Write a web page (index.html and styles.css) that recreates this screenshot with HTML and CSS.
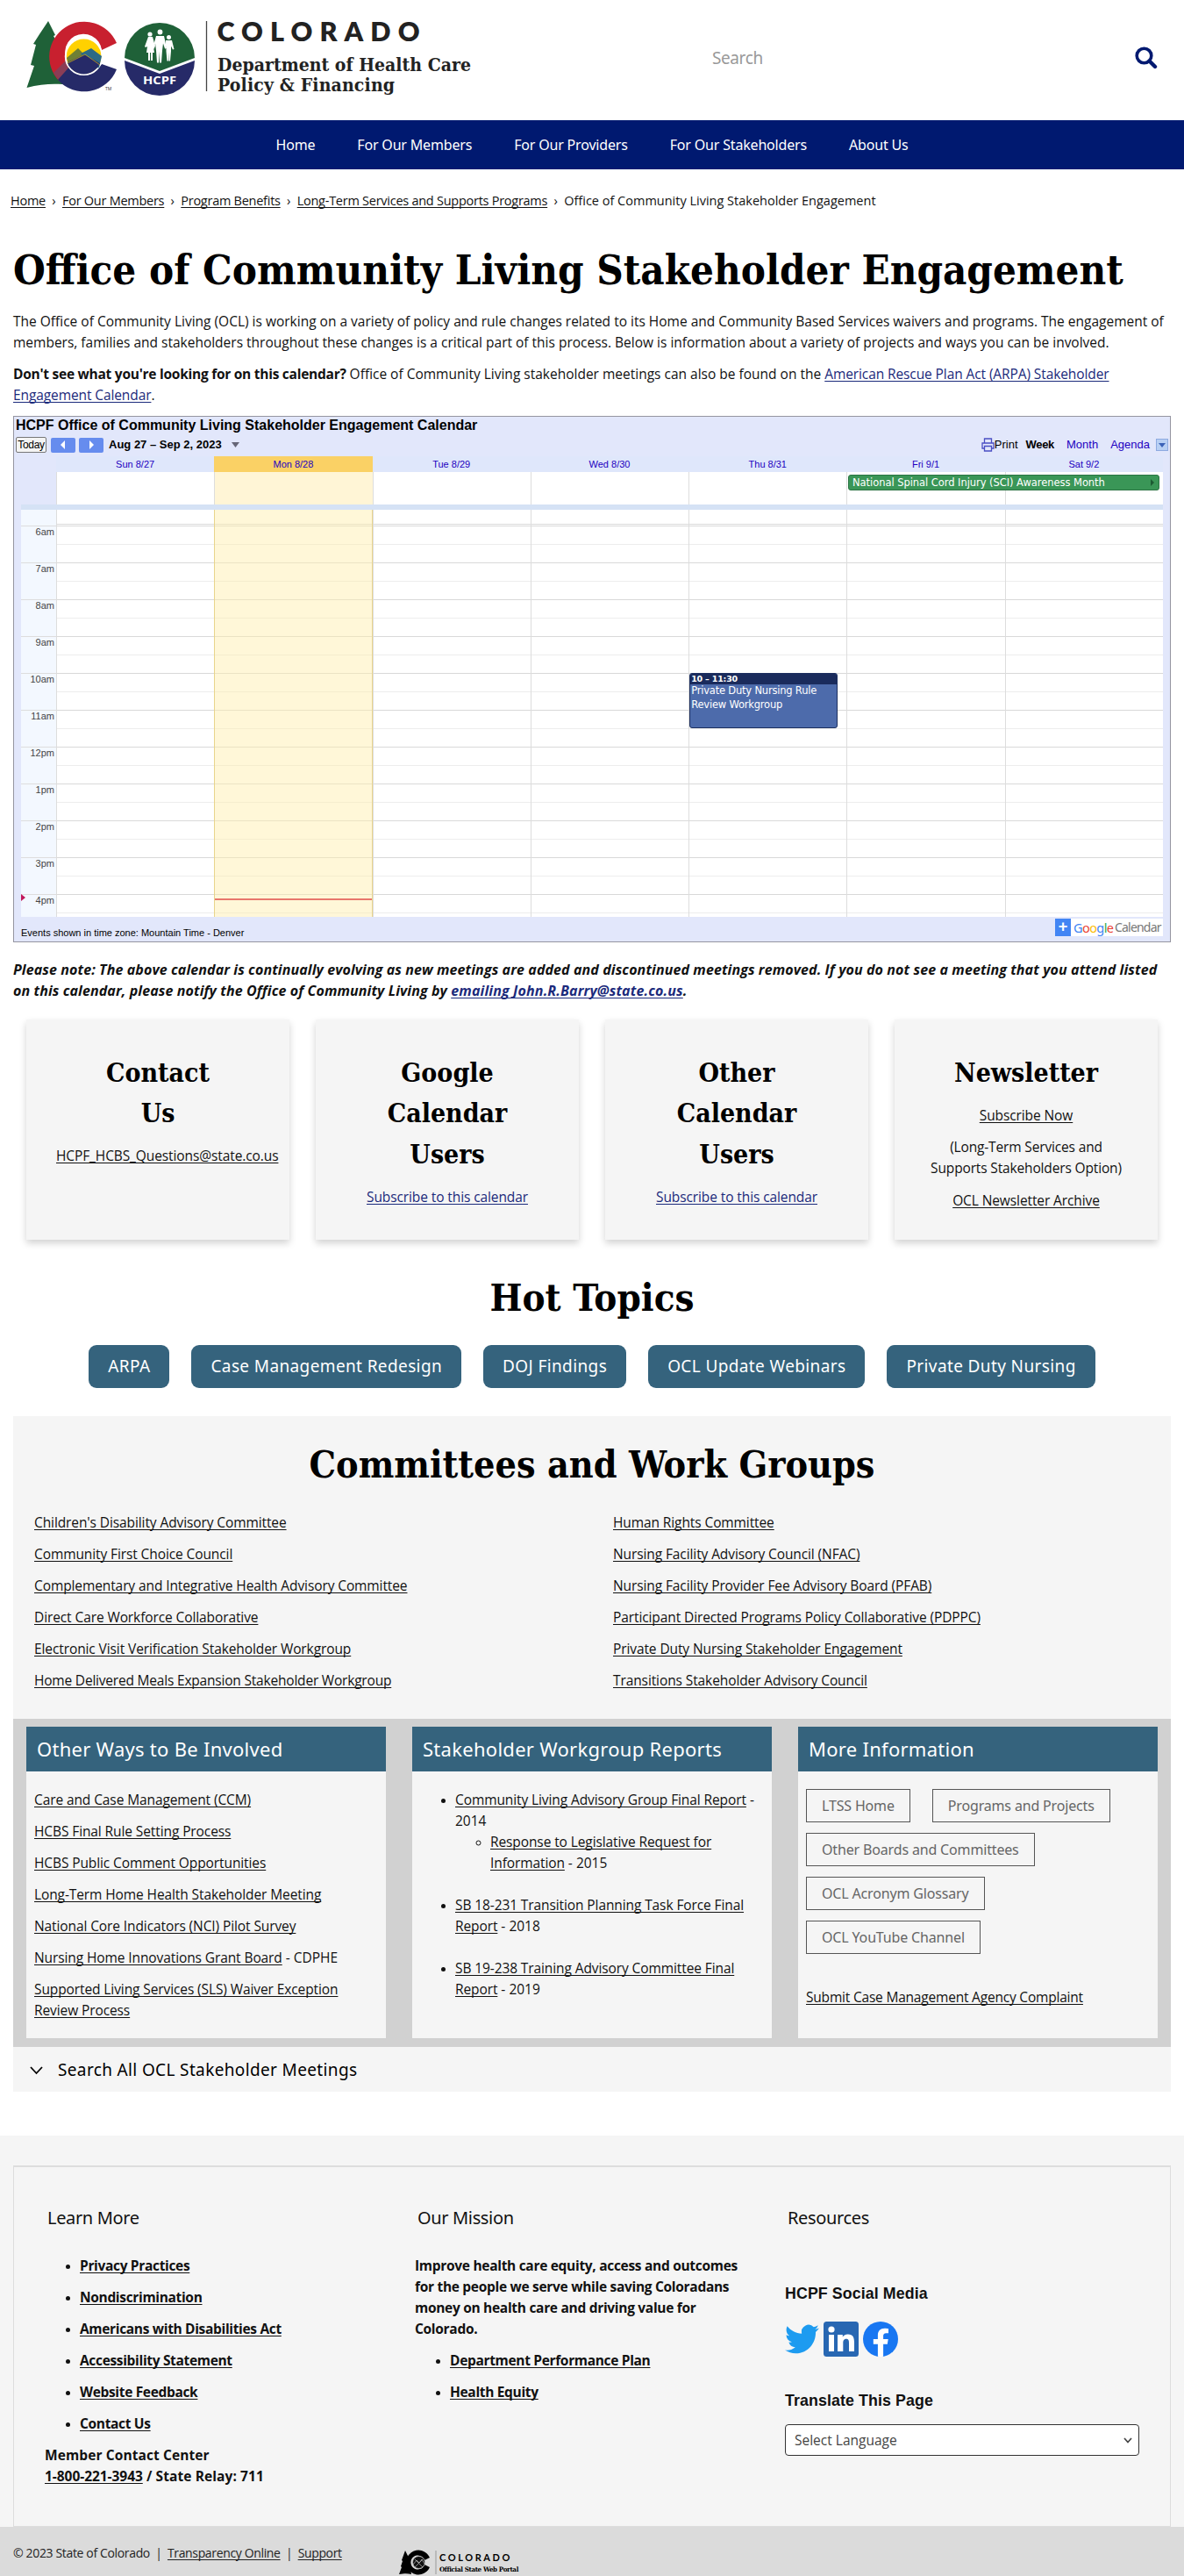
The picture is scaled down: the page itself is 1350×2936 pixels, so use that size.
FILE: index.html
```html
<!DOCTYPE html>
<html lang="en">
<head>
<meta charset="utf-8">
<title>Office of Community Living Stakeholder Engagement</title>
<link rel="stylesheet" href="styles.css">
</head>
<body>
<header class="masthead">
  <svg class="brand" width="560" height="137" viewBox="0 0 560 137">
    <path fill="#1f6138" d="M55 24l8 16-2 1 8 15-3 1 9 17 4 23c-13-2-30-2-48.500 3L39 75l-4-1 6-23-3-1 7-11z"/>
    <path fill="#c8202f" d="M133 49A40 40 0 1 0 67 92L82 76A21 21 0 1 1 116 57z"/>
    <path fill="#8a3d56" d="M61 83l14-14 7 10-14 14z"/>
    <path fill="#262a68" d="M133 79A40 40 0 0 1 66 91L81 74A21 21 0 0 0 116 73z"/>
    <circle cx="95.600" cy="64.300" r="20.800" fill="#ffd100" stroke="#fff" stroke-width="2"/>
    <path fill="#6f8035" d="M76 66l13-11 8 8-18 13z"/>
    <path fill="#2c6a86" d="M92 61l12-6 12 9-3 13-8 1z"/>
    <path fill="#262a68" d="M77 71l19-9 18 10a20 20 0 0 1-37 0z"/>
    <path fill="none" stroke="#ffd100" stroke-width=".6" d="M77 72l20-10 17 12"/>
    <text x="120" y="103" font-size="5" fill="#333" class="brand-sans">TM</text>
    <path fill="#1f6138" d="M142 66a40 40 0 1 1 80 0l-40 15z"/>
    <path fill="#262a68" d="M142 69l40 15 40-15a40 40 0 0 1-80 0z"/>
    <g fill="#fff">
      <circle cx="171" cy="39" r="2.600"/><path d="M169 42h5l3 11-2 1 1 6h-2v9h-2v-9h-1v9h-2v-9h-2l1-7-2 1-1-1z"/>
      <circle cx="182.500" cy="36.500" r="2.900"/><path d="M178 41h9l3 14-2 .500-2-6-1 8-1 14h-2l-.500-13-.500 13h-2l-1-14-1-8-1 6-2-.500z"/>
      <circle cx="192.500" cy="42.500" r="2.500"/><path d="M189 46h7l2.500 10-1.500.500-2-4v6l-1 11h-1.500v-10l-.500 10h-1.500l-1-11v-6l-1 4z"/>
    </g>
    <text x="163" y="96" font-size="12.500" textLength="38" lengthAdjust="spacingAndGlyphs" fill="#fff" font-weight="700" class="brand-sans">HCPF</text>
    <path stroke="#444" stroke-width="1.300" d="M235.500 24v80"/>
    <text x="247.500" y="47" font-size="30.500" textLength="231" fill="#222" font-weight="800" class="brand-lato">COLORADO</text>
    <text x="248" y="81" font-size="21" textLength="289" fill="#222" font-weight="700" class="brand-slab">Department of Health Care</text>
    <text x="248" y="104" font-size="21" textLength="202" fill="#222" font-weight="700" class="brand-slab">Policy &amp; Financing</text>
  </svg>
  <form class="search">
    <span>Search</span>
    <svg width="26" height="26" viewBox="0 0 26 26" fill="none" stroke="#001970"><circle cx="10.500" cy="10.500" r="8.300" stroke-width="3.600"/><path d="M16.500 16.500l6.500 6.500" stroke-width="4.400" stroke-linecap="round"/></svg>
  </form>
</header>
<nav class="mainnav"><a>Home</a><a>For Our Members</a><a>For Our Providers</a><a>For Our Stakeholders</a><a>About Us</a></nav>
<div class="crumbs"><a>Home</a><i>›</i><a>For Our Members</a><i>›</i><a>Program Benefits</a><i>›</i><a>Long-Term Services and Supports Programs</a><i>›</i><span>Office of Community Living Stakeholder Engagement</span></div>

<main>
  <h1>Office of Community Living Stakeholder Engagement</h1>
  <p class="intro">The Office of Community Living (OCL) is working on a variety of policy and rule changes related to its Home and Community Based Services waivers and programs. The engagement of<br>members, families and stakeholders throughout these changes is a critical part of this process. Below is information about a variety of projects and ways you can be involved.</p>
  <p class="intro"><b>Don't see what you're looking for on this calendar?</b> Office of Community Living stakeholder meetings can also be found on the <a class="blue">American Rescue Plan Act (ARPA) Stakeholder<br>Engagement Calendar</a>.</p>

  <section class="cal">
    <div class="cal-title">HCPF Office of Community Living Stakeholder Engagement Calendar</div>
    <div class="cal-bar">
      <span class="today">Today</span>
      <span class="step"><svg width="8" height="10"><path d="M6 0v10L1 5z" fill="#fff"/></svg></span>
      <span class="step"><svg width="8" height="10"><path d="M2 0v10l5-5z" fill="#fff"/></svg></span>
      <b class="range">Aug 27 – Sep 2, 2023</b>
      <svg width="10" height="6"><path d="M0 0h9L4.500 6z" fill="#667"/></svg>
      <div class="views">
        <svg width="15" height="16" viewBox="0 0 15 16" fill="none" stroke="#4a4fc4" stroke-width="1.300"><path d="M3.500 6V1h8v5M3.500 12H1V6h13v6h-2.500M3.500 9.500h8V15h-8z"/></svg>
        <span class="print">Print</span><b>Week</b><a>Month</a><a>Agenda</a>
        <span class="drop"><svg width="8" height="5"><path d="M0 0h8L4 5z" fill="#3b63b8"/></svg></span>
      </div>
    </div>
    <div class="cal-days"><span>Sun 8/27</span><span class="now">Mon 8/28</span><span>Tue 8/29</span><span>Wed 8/30</span><span>Thu 8/31</span><span>Fri 9/1</span><span>Sat 9/2</span></div>
    <div class="cal-allday"><span></span><span class="now"></span><span></span><span></span><span></span><span></span><span></span>
      <div class="ev-green">National Spinal Cord Injury (SCI) Awareness Month<svg width="5" height="8"><path d="M0 0v8l4-4z" fill="#1c5b33"/></svg></div>
    </div>
    <div class="cal-body">
      <div class="hours"><span>6am</span><span>7am</span><span>8am</span><span>9am</span><span>10am</span><span>11am</span><span>12pm</span><span>1pm</span><span>2pm</span><span>3pm</span><span>4pm</span><svg class="mark" width="5" height="8"><path d="M0 0v8l5-4z" fill="#c2185b"/></svg></div>
      <div class="cols"><span></span><span class="now"><i class="nowline"></i></span><span></span><span></span>
        <span><div class="ev-blue"><b>10 – 11:30</b>Private Duty Nursing Rule<br>Review Workgroup</div></span><span></span><span></span></div>
    </div>
    <div class="cal-foot"><span>Events shown in time zone: Mountain Time - Denver</span>
      <span class="gcal"><i>+</i><b><em class="g1">G</em><em class="g2">o</em><em class="g3">o</em><em class="g1">g</em><em class="g4">l</em><em class="g2">e</em></b><u>Calendar</u></span></div>
  </section>

  <p class="note">Please note: The above calendar is continually evolving as new meetings are added and discontinued meetings removed. If you do not see a meeting that you attend listed<br>on this calendar, please notify the Office of Community Living by <a class="blue">emailing John.R.Barry@state.co.us</a>.</p>

  <section class="cards">
    <div class="card"><h3>Contact<br>Us</h3><a class="mail">HCPF_HCBS_Questions@state.co.us</a></div>
    <div class="card"><h3>Google<br>Calendar<br>Users</h3><a class="blue">Subscribe to this calendar</a></div>
    <div class="card"><h3>Other<br>Calendar<br>Users</h3><a class="blue">Subscribe to this calendar</a></div>
    <div class="card"><h3>Newsletter</h3><a>Subscribe Now</a><p>(Long-Term Services and<br>Supports Stakeholders Option)</p><a>OCL Newsletter Archive</a></div>
  </section>

  <h2 class="hot">Hot Topics</h2>
  <div class="pills"><a>ARPA</a><a>Case Management Redesign</a><a>DOJ Findings</a><a>OCL Update Webinars</a><a>Private Duty Nursing</a></div>

  <section class="groups">
    <h2>Committees and Work Groups</h2>
    <div class="two">
      <div class="links"><a>Children's Disability Advisory Committee</a><a>Community First Choice Council</a><a>Complementary and Integrative Health Advisory Committee</a><a>Direct Care Workforce Collaborative</a><a>Electronic Visit Verification Stakeholder Workgroup</a><a class="tight">Home Delivered Meals Expansion Stakeholder Workgroup</a></div>
      <div class="links"><a>Human Rights Committee</a><a>Nursing Facility Advisory Council (NFAC)</a><a>Nursing Facility Provider Fee Advisory Board (PFAB)</a><a>Participant Directed Programs Policy Collaborative (PDPPC)</a><a>Private Duty Nursing Stakeholder Engagement</a><a>Transitions Stakeholder Advisory Council</a></div>
    </div>
    <div class="three">
      <div class="panel"><h4>Other Ways to Be Involved</h4>
        <div class="links"><a>Care and Case Management (CCM)</a><a>HCBS Final Rule Setting Process</a><a>HCBS Public Comment Opportunities</a><a>Long-Term Home Health Stakeholder Meeting</a><a>National Core Indicators (NCI) Pilot Survey</a><p><a>Nursing Home Innovations Grant Board</a> - CDPHE</p><a>Supported Living Services (SLS) Waiver Exception<br>Review Process</a></div>
      </div>
      <div class="panel"><h4>Stakeholder Workgroup Reports</h4>
        <ul class="reports">
          <li><a>Community Living Advisory Group Final Report</a> -<br>2014
            <ul><li><a>Response to Legislative Request for<br>Information</a> - 2015</li></ul></li>
          <li><a>SB 18-231 Transition Planning Task Force Final<br>Report</a> - 2018</li>
          <li><a>SB 19-238 Training Advisory Committee Final<br>Report</a> - 2019</li>
        </ul>
      </div>
      <div class="panel"><h4>More Information</h4>
        <div class="outline"><a>LTSS Home</a><a>Programs and Projects</a><a>Other Boards and Committees</a><a>OCL Acronym Glossary</a><a>OCL YouTube Channel</a></div>
        <a class="submit">Submit Case Management Agency Complaint</a>
      </div>
    </div>
    <div class="expander"><svg width="15" height="10" fill="none" stroke="#000" stroke-width="1.800"><path d="M1 1l6.500 7L14 1"/></svg>Search All OCL Stakeholder Meetings</div>
  </section>
</main>

<footer>
  <div class="foot">
    <div><h5>Learn More</h5>
      <ul><li><a>Privacy Practices</a></li><li><a>Nondiscrimination</a></li><li><a>Americans with Disabilities Act</a></li><li><a>Accessibility Statement</a></li><li><a>Website Feedback</a></li><li><a>Contact Us</a></li></ul>
      <p>Member Contact Center<br><a>1-800-221-3943</a> / State Relay: 711</p></div>
    <div><h5>Our Mission</h5>
      <p class="mission">Improve health care equity, access and outcomes<br>for the people we serve while saving Coloradans<br>money on health care and driving value for<br>Colorado.</p>
      <ul><li><a>Department Performance Plan</a></li><li><a>Health Equity</a></li></ul></div>
    <div><h5>Resources</h5>
      <h6>HCPF Social Media</h6>
      <div class="social">
        <svg width="39" height="40" viewBox="0 0 24 24" preserveAspectRatio="none"><path fill="#1d9bf0" d="M23.950 4.570a10 10 0 0 1-2.820.770 4.960 4.960 0 0 0 2.160-2.720c-.950.550-2 .950-3.120 1.180a4.920 4.920 0 0 0-8.380 4.480C7.690 8.090 4.070 6.130 1.640 3.160a4.820 4.820 0 0 0-.670 2.480c0 1.710.870 3.210 2.190 4.100a4.900 4.900 0 0 1-2.230-.620v.060a4.920 4.920 0 0 0 3.950 4.830 5 5 0 0 1-2.210.080 4.940 4.940 0 0 0 4.600 3.420A9.870 9.870 0 0 1 0 19.540a14 14 0 0 0 7.550 2.210c9.050 0 14-7.500 14-13.980 0-.210 0-.420-.020-.630a9.940 9.940 0 0 0 2.420-2.570z"/></svg>
        <svg width="40" height="40" viewBox="0 0 40 40"><rect width="40" height="40" rx="3.500" fill="#2867b2"/><g fill="#fff"><circle cx="9" cy="9" r="3.600"/><path d="M6 15h6v19H6zM16 15h5.800v2.600c.900-1.600 3-3.200 6-3.200 6 0 7.200 3.900 7.200 9.100V34h-6v-9.300c0-2.200 0-5-3.100-5s-3.600 2.400-3.600 4.900V34H16z"/></g></svg>
        <svg width="40" height="40" viewBox="0 0 40 40"><circle cx="20" cy="20" r="20" fill="#1877f2"/><path fill="#fff" d="M27.800 25.800l.900-5.800h-5.600v-3.700c0-1.600.800-3.100 3.300-3.100H29v-5s-2.300-.400-4.500-.400c-4.600 0-7.600 2.800-7.600 7.800V20h-5.100v5.800h5.100v13.900a20 20 0 0 0 6.200 0V25.800z"/></svg>
      </div>
      <h6>Translate This Page</h6>
      <div class="select"><span>Select Language</span><svg width="10" height="7" fill="none" stroke="#444" stroke-width="1.700"><path d="M1 1l4 4.500L9 1"/></svg></div></div>
  </div>
  <div class="legal"><span>© 2023 State of Colorado</span><i>|</i><a>Transparency Online</a><i>|</i><a>Support</a>
    <svg class="portal" width="140" height="30" viewBox="0 0 140 30">
      <path d="M7 1l3 6 2 8 2 13c-4-1-8-1-14 0l3-8-1-1 2-6-1-1z"/>
      <path d="M35 9A14 14 0 1 0 35 20l-6-3a8 8 0 1 1 0-5z"/><circle cx="22.500" cy="14.500" r="7" fill="#111" stroke="#ccc" stroke-width=".7"/><path d="M16 17l4-5 3 3 3-4 3 5M18 20l9-9M18 11l9 9" fill="none" stroke="#bbb" stroke-width=".7"/>
      <path d="M42 1v27" stroke="#999"/>
      <text x="46" y="13" font-size="11" textLength="80" font-weight="700" class="brand-lato">COLORADO</text>
      <text x="46" y="25" font-size="7.500" textLength="90" lengthAdjust="spacingAndGlyphs" font-weight="700" class="brand-slab">Official State Web Portal</text>
    </svg></div>
</footer>
</body>
</html>
```
FILE: styles.css
```css
* { box-sizing: border-box; }
body { margin: 0; background: #fff; color: #111; font: 15.5px/24px "Open Sans", "Noto Sans", sans-serif; }
h1, h2, h3, h4, h5, h6, p, ul { margin: 0; padding: 0; font-weight: inherit; }
a { color: inherit; text-decoration: underline; text-underline-offset: 2px; text-decoration-thickness: 1px; text-decoration-skip-ink: none; letter-spacing: -.1px; }
a.blue { color: #1b2a7b; }
h1, h2, h3, .brand-slab { font-family: "DejaVu Serif Condensed", "DejaVu Serif", serif; font-weight: 700; color: #000; }
h1, h2, h3 { white-space: nowrap; }
.brand-sans { font-family: "Open Sans", sans-serif; }
.brand-lato { font-family: Lato, sans-serif; }

.masthead { height: 137px; display: flex; }
.brand { flex: none; display: block; }
.search { flex: 1; display: flex; justify-content: space-between; align-items: center; padding: 0 30px 6px 252px; font: 19px/24px "Noto Sans", sans-serif; color: #999; letter-spacing: -.4px; }
.mainnav { height: 56px; background: #001970; display: flex; justify-content: center; gap: 48px; font: 16px/56px "Noto Sans", sans-serif; }
.mainnav a { color: #fff; text-decoration: none; letter-spacing: -.18px; }
.crumbs { height: 85px; padding: 24px 12px 0; font-size: 14.5px; display: flex; gap: 6.5px; white-space: nowrap; }
.crumbs a { letter-spacing: -.26px; }
.crumbs i { font-style: normal; width: 6px; text-align: center; }

main { width: 1320px; margin: 0 auto; }
h1 { font-size: 47px; line-height: 60px; padding-bottom: 16px; }
.intro { white-space: nowrap; padding-bottom: 12px; }
.intro b { letter-spacing: -.26px; }
.note { font-size: 16px; font-weight: 700; font-style: italic; white-space: nowrap; letter-spacing: .1px; padding: 19px 0 21px; }
.note a { letter-spacing: .14px; }

.cal { height: 600px; border: 1px solid #9595a0; background: #e2e7fb; font-family: "Liberation Sans", Arial, sans-serif; color: #000; display: flex; flex-direction: column; white-space: nowrap; }
.cal > div { flex-shrink: 0; }
.cal a { color: #2200c1; text-decoration: none; letter-spacing: 0; }
.cal-title { font-weight: 700; font-size: 16px; line-height: 20px; height: 22px; padding-left: 2px; }
.cal-bar { height: 20px; display: flex; align-items: center; padding: 0 2px; font-size: 13px; line-height: 16px; }
.today { border: 1px solid #777; background: #f4f4f4; width: 35px; text-align: center; font-size: 12px; margin-right: 5px; border-radius: 2px; letter-spacing: -.3px; }
.step { background: #668cee; width: 28px; height: 17px; margin-right: 4px; display: flex; align-items: center; justify-content: center; border-radius: 2px; }
.range { margin: 0 11px 0 2px; }
.views { margin-left: auto; display: flex; align-items: center; font-size: 13px; }
.views b { margin: 0 14px 0 9px; letter-spacing: -.3px; }
.views a { margin-right: 14px; }
.views a + a { margin-right: 7px; }
.drop { width: 14px; height: 14px; background: #b8d0f4; border: 1px solid #8eaae0; display: flex; align-items: center; justify-content: center; }
.cal-days, .cal-allday { display: grid; grid-template-columns: repeat(7, 1fr); margin: 3px 8px 0 48px; }
.cal-days { height: 18px; font-size: 11px; line-height: 18px; text-align: center; color: #2200c1; background: #dfe7fb; }
.cal-days .now { background: #fad165; }
.cal-allday { margin-top: 0; height: 37px; background: #fff; position: relative; }
.cal-allday span, .cols span { border-left: 1px solid #ddd; }
.cal-allday .now { background: #fff5d6; }
.ev-green { position: absolute; left: 903px; right: 4px; top: 3px; height: 18px; border-radius: 3px; background: #3a9657; border: 1px solid #2b7443; color: #fff; font: 11.5px/16px "DejaVu Sans", Verdana, sans-serif; letter-spacing: -.05px; padding: 0 4px; display: flex; justify-content: space-between; align-items: center; }
.cal-body { height: 470px; margin: 0 8px; border-top: 6px solid #d5e2f5; display: flex; }
.hours { width: 40px; background: #f3f8ff; padding-top: 18px; overflow: hidden; position: relative; }
.hours span { display: block; height: 42px; border-top: 1px solid #ddd; font-size: 11px; line-height: 13px; text-align: right; padding-right: 2px; color: #444; }
.mark { position: absolute; left: 0; top: 438px; }
.cols { flex: 1; display: grid; grid-template-columns: repeat(7, 1fr); background: repeating-linear-gradient(#d9d9d9 0 1px, transparent 1px 21px, #ededed 21px 22px, transparent 22px 42px) 0 18px #fff; }
.cols span { position: relative; }
.cols .now { background: #ffeeab77; border-left: 1px solid #e8d48c; border-right: 1px solid #e8d48c; }
.nowline { position: absolute; left: 0; right: 0; top: 443px; height: 2px; background: #e8776d; }
.ev-blue { position: absolute; left: 0; right: 10px; top: 186px; height: 63px; border: 1px solid #1c2f5f; border-radius: 3px; background: #4d6bab; color: #fff; font: 11.5px/15.500px "DejaVu Sans", Verdana, sans-serif; letter-spacing: -.2px; padding-left: 1px; overflow: hidden; }
.ev-blue b { display: block; background: #1a2b5c; font-size: 9.5px; line-height: 12px; margin-left: -1px; padding-left: 1px; }
.cal-foot { height: 28px; display: flex; justify-content: space-between; align-items: flex-start; padding: 2px 8px 0; font-size: 11px; }
.cal-foot > span:first-child { padding-top: 5px; line-height: 22px; }
.gcal { display: flex; height: 20px; background: #fff; line-height: 20px; width: 123px; }
.gcal i { background: #4285f4; color: #fff; width: 18px; font: 700 18px/19px "Liberation Sans", sans-serif; text-align: center; margin-right: 3px; }
.gcal b, .gcal u { font: 14px/20px "Noto Sans", sans-serif; text-decoration: none; }
.gcal u { color: #777; letter-spacing: -.8px; }
.gcal b { width: 47px; font-size: 14.5px; letter-spacing: -.6px; }
.gcal em { font-style: normal; }
.g1 { color: #4285f4; } .g2 { color: #ea4335; } .g3 { color: #fbbc05; } .g4 { color: #34a853; }

.cards { display: grid; grid-template-columns: repeat(4, minmax(0, 1fr)); }
.card { margin: 0 15px; height: 251px; background: #f5f5f5; box-shadow: 0 4px 8px rgba(0,0,0,.18); padding: 38px 34px 0; display: flex; flex-direction: column; align-items: center; gap: 12.500px; text-align: center; }
.card h3 { font-size: 30px; line-height: 46.4px; }
.card .mail { align-self: flex-start; }
.card p { white-space: nowrap; letter-spacing: -.15px; }

h2 { font-size: 42.7px; line-height: 60px; text-align: center; }
.hot { margin-top: 36px; padding-bottom: 24px; font-size: 43.5px; }
.pills { display: flex; justify-content: center; gap: 25px; }
.pills a { background: #35637d; color: #fff; text-decoration: none; border-radius: 9px; padding: 0 22px; font: 19px/49px "Noto Sans", sans-serif; letter-spacing: .38px; }

.groups { margin-top: 32px; height: 770px; background: #f5f5f5; padding-top: 25px; }
.two { display: grid; grid-template-columns: 1fr 1fr; height: 260px; padding-top: 24px; }
.links { display: flex; flex-direction: column; align-items: flex-start; gap: 12px; padding-left: 24px; white-space: nowrap; }
.links .tight { letter-spacing: -.2px; }
.three { background: #d1d1d1; height: 374px; padding: 9px 15px 10px; display: grid; grid-template-columns: repeat(3, 1fr); gap: 30px; }
.panel { background: #f5f5f5; }
.panel h4 { background: #35637d; color: #fff; height: 51px; padding-left: 12px; font: 22px/51px "Noto Sans", sans-serif; letter-spacing: .28px; }
.panel .links { padding: 20px 0 0 9px; }
.reports { list-style: disc; padding: 20px 0 0 49px; white-space: nowrap; }
.reports > li { margin-bottom: 24px; }
.reports ul { list-style: circle; padding-left: 40px; }
.reports li::marker { font-size: 13px; }
.outline { padding: 20px 9px 0; display: flex; flex-wrap: wrap; gap: 12px 25px; }
.outline a { border: 1px solid #555; color: #666; text-decoration: none; height: 38px; padding: 0 17px; font: 16px/36px "Noto Sans", sans-serif; letter-spacing: -.16px; }
.submit { display: block; margin: 37px 0 0 9px; letter-spacing: -.2px; }
.expander { display: flex; align-items: center; gap: 17px; padding-left: 19px; height: 53px; font: 19px/53px "Noto Sans", sans-serif; letter-spacing: .36px; color: #000; }

footer { margin-top: 50px; background: #f5f5f5; padding-top: 34px; }
.foot { width: 1320px; height: 412px; margin: 0 auto; border: 1px solid #ddd; border-top-width: 2px; display: grid; grid-template-columns: repeat(3, 422px); padding: 43px 0 0 35px; font-weight: 700; letter-spacing: -.3px; white-space: nowrap; }
.foot a { letter-spacing: -.33px; }
.foot h5 { font: 20px/30px "Noto Sans", sans-serif; letter-spacing: -.35px; padding-left: 3px; margin-bottom: 27px; }
.foot ul { padding-left: 40px; }
.foot li { margin-bottom: 12px; }
.foot li::marker { font-size: 13px; }
.foot ul + p { letter-spacing: 0; }
.foot ul + p a { letter-spacing: -.05px; }
.foot ul + p { letter-spacing: .1px; }
.mission { padding-bottom: 12px; }
.foot h6 { font: 700 17.800px/24px "Liberation Sans", Arial, sans-serif; letter-spacing: .1px; }
.foot h5 + h6 { margin-top: 59px; }
.social { display: flex; gap: 5px; margin: 20px 0 38px; }
.select { margin-top: 15px; width: 404px; height: 36px; border: 1px solid #333; border-radius: 4px; background: #fff; display: flex; justify-content: space-between; align-items: center; padding: 0 7px 0 10px; font-weight: 400; color: #444; letter-spacing: 0; }
.select span { line-height: 24px; }
.legal { height: 56px; background: #dbdbdb; padding: 18px 15px 0; display: flex; font-size: 14px; letter-spacing: -.35px; color: #222; }
.legal a { letter-spacing: -.35px; }
.legal i { font-style: normal; width: 20px; text-align: center; }
.portal { margin: 8px 0 0 65px; }
```
